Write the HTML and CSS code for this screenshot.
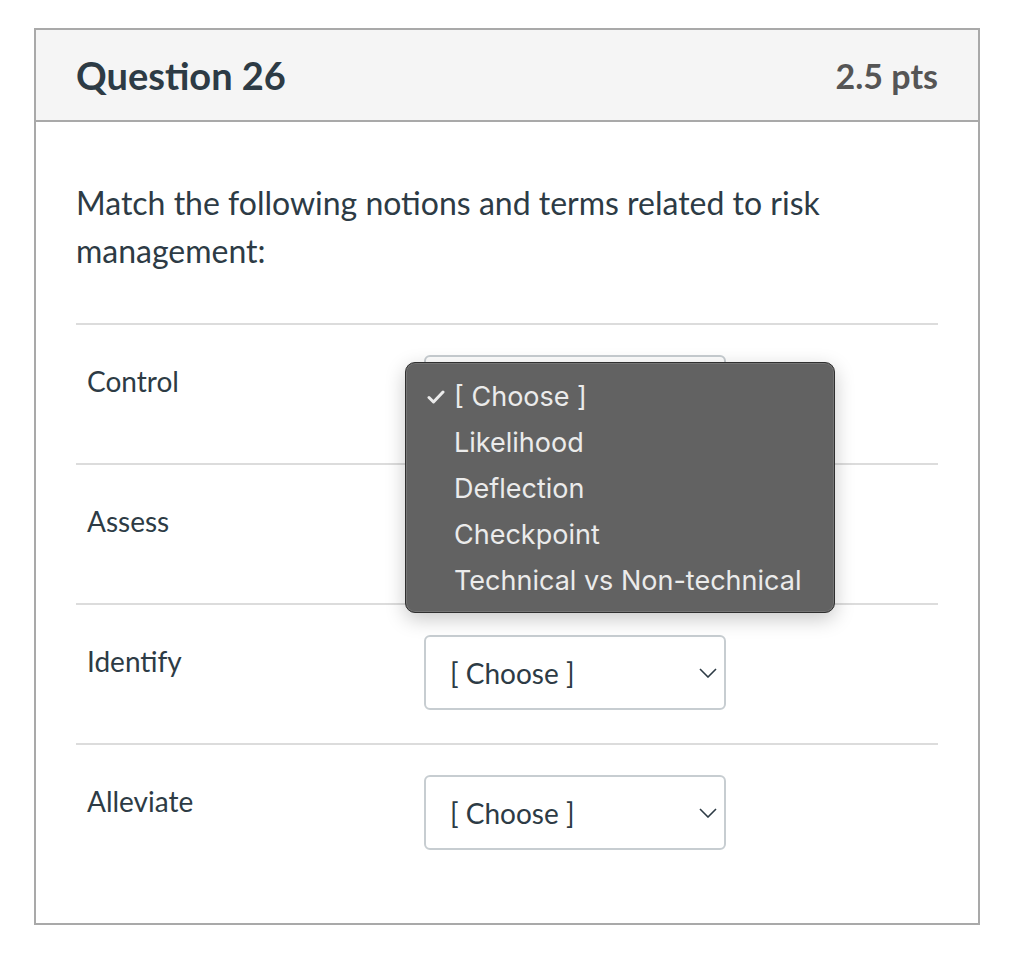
FILE: index.html
```html
<!DOCTYPE html>
<html>
<head>
<meta charset="utf-8">
<link rel="stylesheet" href="styles.css">
</head>
<body>
<div class="card">
  <div class="card-head">
    <h2 class="title">Question 26</h2>
    <div class="pts">2.5 pts</div>
  </div>
  <div class="card-body">
    <p class="question">Match the following notions and terms related to risk management:</p>
    <div class="rows">
      <div class="row">
        <div class="label">Control</div>
        <div class="select"><span>[ Choose ]</span><svg class="chev" viewBox="0 0 18 10"><path d="M1 1 L9 9 L17 1" /></svg></div>
      </div>
      <div class="row">
        <div class="label">Assess</div>
        <div class="select"><span>[ Choose ]</span><svg class="chev" viewBox="0 0 18 10"><path d="M1 1 L9 9 L17 1" /></svg></div>
      </div>
      <div class="row">
        <div class="label">Identify</div>
        <div class="select"><span>[ Choose ]</span><svg class="chev" viewBox="0 0 18 10"><path d="M1 1 L9 9 L17 1" /></svg></div>
      </div>
      <div class="row">
        <div class="label">Alleviate</div>
        <div class="select"><span>[ Choose ]</span><svg class="chev" viewBox="0 0 18 10"><path d="M1 1 L9 9 L17 1" /></svg></div>
      </div>
    </div>
  </div>
  <ul class="menu">
    <li class="sel"><svg class="check" viewBox="0 0 18 14"><path d="M2 7.5 L6.5 12 L16 2" /></svg>[ Choose ]</li>
    <li>Likelihood</li>
    <li>Deflection</li>
    <li>Checkpoint</li>
    <li>Technical vs Non-technical</li>
  </ul>
</div>
</body>
</html>
```
FILE: styles.css
```css
html, body {
  margin: 0;
  padding: 0;
  background: #fff;
}
body {
  font-family: Lato, "Liberation Sans", sans-serif;
  color: #2d3b45;
}
.card {
  position: relative;
  margin: 28px 0 0 34px;
  width: 942px;
  border: 2px solid #a9a9a9;
  box-sizing: content-box;
}
.card-head {
  display: flex;
  justify-content: space-between;
  align-items: center;
  height: 90px;
  background: #f5f5f5;
  border-bottom: 2px solid #a9a9a9;
  padding: 0 40px 0 40px;
}
.title {
  margin: 0;
  font-size: 38px;
  font-weight: 700;
  color: #2d3b45;
}
.pts {
  font-size: 34px;
  font-weight: 700;
  color: #555;
}
.card-body {
  padding: 57px 40px 40px 40px;
}
.question {
  margin: 0 0 48px 0;
  font-size: 32px;
  line-height: 48px;
  color: #2d3b45;
  max-width: 800px;
}
.rows {
  border-top: 2px solid #dcdcdc;
}
.row {
  display: flex;
  align-items: flex-start;
  height: 138px;
  border-bottom: 2px solid #dcdcdc;
}
.row:last-child {
  border-bottom: none;
}
.label {
  width: 337px;
  padding: 40px 0 0 11px;
  font-size: 28px;
  line-height: 32px;
}
.select {
  margin-top: 30px;
  box-sizing: border-box;
  width: 302px;
  height: 75px;
  border: 2px solid #c7cdd1;
  border-radius: 6px;
  display: flex;
  align-items: center;
  justify-content: space-between;
  padding: 0 7px 0 24px;
  font-size: 28px;
}
.chev {
  width: 18px;
  height: 10px;
  fill: none;
  stroke: #2d3b45;
  stroke-width: 1.6;
}
.menu {
  position: absolute;
  left: 369px;
  top: 332px;
  width: 430px;
  height: 251px;
  box-sizing: border-box;
  margin: 0;
  padding: 11px 0 0 0;
  list-style: none;
  background: #626262;
  border: 1.5px solid #2f2f2f;
  border-radius: 10px;
  box-shadow: 0 6px 20px rgba(0,0,0,0.22), inset 0 0 0 1px rgba(255,255,255,0.12);
  font-family: Inter, "Noto Sans", sans-serif;
  font-size: 27px;
  color: #ebebeb;
}
.menu li {
  height: 46px;
  line-height: 46px;
  padding-left: 48px;
  position: relative;
}
.menu .check {
  position: absolute;
  left: 21px;
  top: 16px;
  width: 18px;
  height: 14px;
  fill: none;
  stroke: #ebebeb;
  stroke-width: 3;
  stroke-linecap: round;
  stroke-linejoin: round;
}
```
